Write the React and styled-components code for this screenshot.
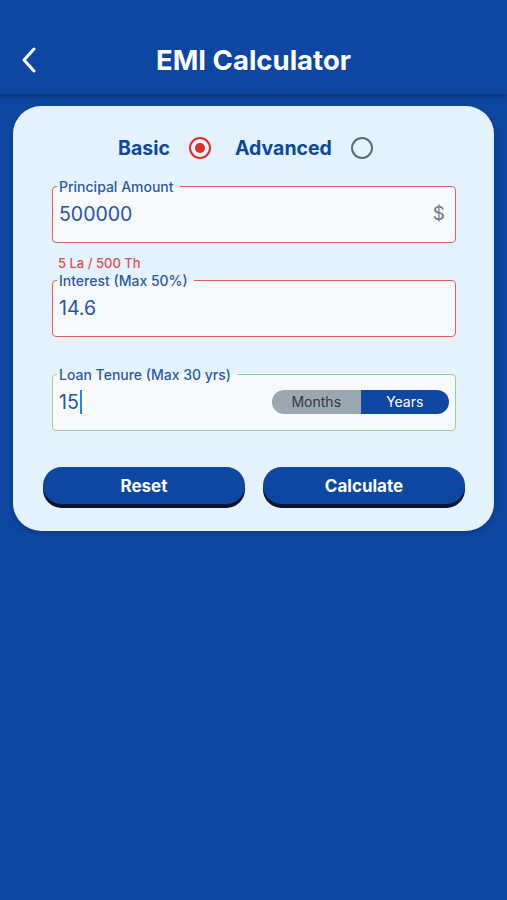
import React from 'react';
import styled, { createGlobalStyle } from 'styled-components';

const Global = createGlobalStyle`
  html, body {
    margin: 0;
    padding: 0;
    background: #0d47a1;
    font-family: Inter, "Noto Sans", "Liberation Sans", sans-serif;
  }
`;

const Page = styled.div`
  min-height: 900px;
  background: #0d47a1;
`;

const Header = styled.header`
  height: 94px;
  box-sizing: border-box;
  padding-top: 43px;
  display: flex;
  align-items: flex-start;
  justify-content: center;
  position: relative;
  background: #0d47a1;
  box-shadow: 0 3px 4px rgba(0, 0, 0, 0.25);
`;

const Back = styled.button`
  position: absolute;
  left: 14px;
  top: 44px;
  width: 30px;
  height: 32px;
  border: none;
  background: none;
  padding: 0;
  display: flex;
  align-items: center;
  justify-content: center;
`;

const Title = styled.h1`
  margin: 0;
  font-size: 27.5px;
  font-weight: 700;
  color: #fff;
  line-height: 34px;
`;

const Card = styled.main`
  margin: 12px 13px 0;
  background: #e3f2fd;
  border-radius: 28px;
  padding: 30px 29px 27px 30px;
  display: flex;
  flex-direction: column;
  box-shadow: 0 2px 6px rgba(0, 0, 0, 0.2);
`;

const ModeRow = styled.div`
  display: flex;
  align-items: center;
  justify-content: center;
  height: 24px;
  margin-bottom: 18px;
  padding-right: 17px;
`;

const ModeLabel = styled.span`
  font-size: 19.5px;
  font-weight: 700;
  color: #0d47a1;
  margin-right: 19px;
  margin-left: ${p => (p.$first ? '0' : '5px')};
`;

const Radio = styled.span`
  width: 22px;
  height: 22px;
  box-sizing: border-box;
  border-radius: 50%;
  border: 2.5px solid ${p => (p.$on ? '#d9302c' : '#5d6d75')};
  display: flex;
  align-items: center;
  justify-content: center;
  margin-right: ${p => (p.$first ? '19px' : '0')};
  &::after {
    content: '';
    width: 10px;
    height: 10px;
    border-radius: 50%;
    background: ${p => (p.$on ? '#d9302c' : 'transparent')};
  }
`;

const Field = styled.fieldset`
  margin: 0 9px;
  padding: 0 8px 0 4px;
  border: 1.5px solid ${p => p.$color};
  border-radius: 4px;
  background: #f8f9fa;
  min-width: 0;
`;

const Legend = styled.legend`
  padding: 0 6px 0 2px;
  font-size: 14px;
  line-height: 17px;
  font-weight: 500;
  color: #2b5aa6;
`;

const FieldBody = styled.div`
  height: 48px;
  margin-top: -1px;
  display: flex;
  align-items: center;
  justify-content: space-between;
  padding-left: 2px;
  padding-bottom: 9px;
  box-sizing: border-box;
`;

const Value = styled.span`
  font-size: 19.5px;
  color: #2356a4;
  display: flex;
  align-items: center;
`;

const Caret = styled.span`
  width: 2px;
  height: 24px;
  background: #2f80ed;
  margin-left: 1px;
`;

const Suffix = styled.span`
  font-size: 19px;
  color: #6b7a83;
  margin-right: 2px;
`;

const Helper = styled.div`
  margin: 12px 9px 1px 15px;
  font-size: 13px;
  font-weight: 500;
  line-height: 16px;
  height: 16px;
  color: #d9534f;
`;

const Spacer = styled.div`
  height: ${p => p.$h}px;
`;

const Toggle = styled.div`
  display: flex;
  width: 177px;
  height: 24px;
  border-radius: 12px;
  overflow: hidden;
  margin-right: -2px;
`;

const Segment = styled.span`
  flex: 1;
  display: flex;
  align-items: center;
  justify-content: center;
  font-size: 14px;
  color: ${p => (p.$active ? '#fff' : '#2e3a42')};
  background: ${p => (p.$active ? '#0d47a1' : '#9ba8b1')};
`;

const Actions = styled.div`
  display: grid;
  grid-template-columns: 1fr 1fr;
  gap: 18px;
  margin-top: 36px;
`;

const Button = styled.button`
  height: 37px;
  border: none;
  border-radius: 19px;
  background: #0d47a1;
  color: #fff;
  font-family: inherit;
  font-size: 17px;
  font-weight: 700;
  box-shadow: 0 4px 0 #0a1630;
`;

const Chevron = () => (
  <svg width="16" height="26" viewBox="0 0 16 26">
    <path d="M13 2 L3 13 L13 24" fill="none" stroke="#fff" strokeWidth="3" strokeLinecap="round" strokeLinejoin="round" />
  </svg>
);

export default function App() {
  return (
    <Page>
      <Global />
      <Header>
        <Back aria-label="Back">
          <Chevron />
        </Back>
        <Title>EMI Calculator</Title>
      </Header>
      <Card>
        <ModeRow>
          <ModeLabel $first>Basic</ModeLabel>
          <Radio $on $first />
          <ModeLabel>Advanced</ModeLabel>
          <Radio />
        </ModeRow>

        <Field $color="#e06060">
          <Legend>Principal Amount</Legend>
          <FieldBody>
            <Value>500000</Value>
            <Suffix>$</Suffix>
          </FieldBody>
        </Field>
        <Helper>5 La / 500 Th</Helper>

        <Field $color="#e06060">
          <Legend>Interest (Max 50%)</Legend>
          <FieldBody>
            <Value>14.6</Value>
          </FieldBody>
        </Field>
        <Spacer $h={29} />

        <Field $color="#93d393">
          <Legend>Loan Tenure (Max 30 yrs)</Legend>
          <FieldBody>
            <Value>
              15<Caret />
            </Value>
            <Toggle>
              <Segment>Months</Segment>
              <Segment $active>Years</Segment>
            </Toggle>
          </FieldBody>
        </Field>

        <Actions>
          <Button>Reset</Button>
          <Button>Calculate</Button>
        </Actions>
      </Card>
    </Page>
  );
}
